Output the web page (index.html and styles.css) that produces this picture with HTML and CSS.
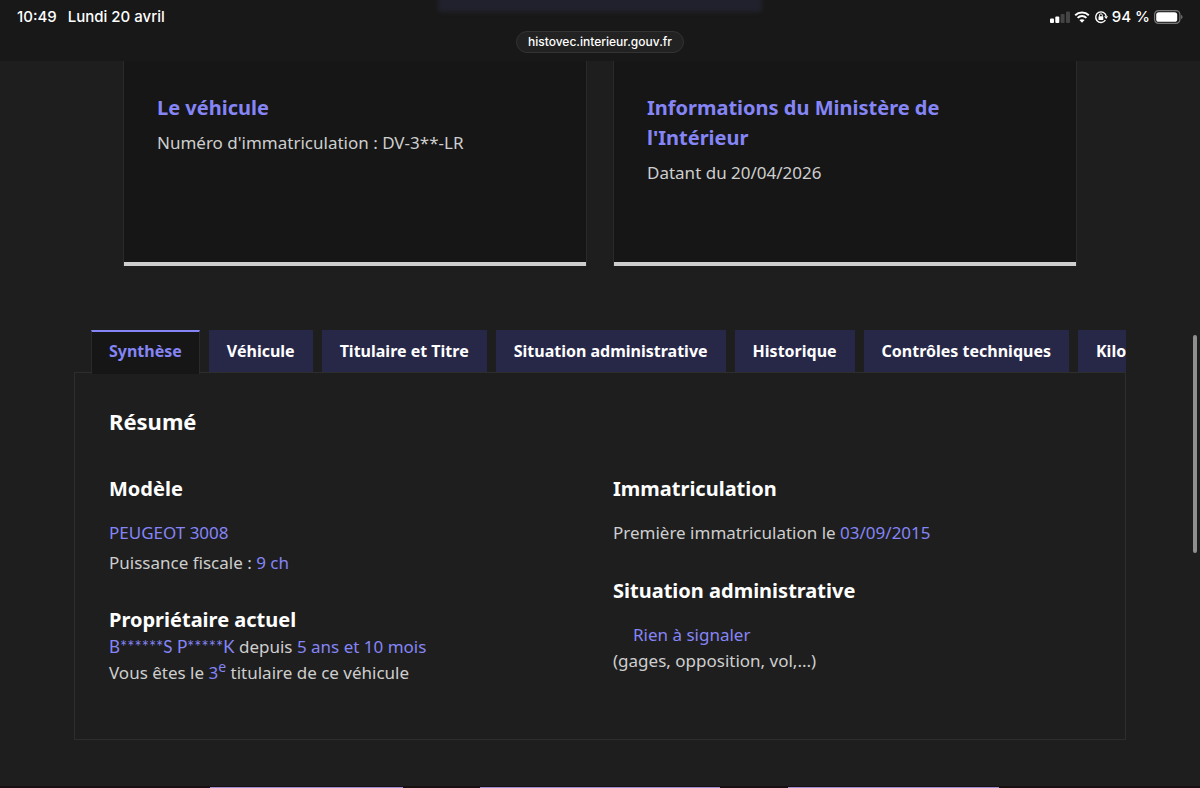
FILE: index.html
```html
<!DOCTYPE html>
<html lang="fr">
<head>
<meta charset="utf-8">
<meta name="viewport" content="width=device-width, initial-scale=1">
<title>HistoVec</title>
<link rel="stylesheet" href="styles.css">
</head>
<body>
<header class="status">
  <div class="glow"></div>
  <div class="status-row">
    <div class="status-left"><span>10:49</span><span>Lundi 20 avril</span></div>
    <div class="status-right">
      <svg class="signal" width="20" height="12" viewBox="0 0 20 12" aria-hidden="true"><rect x="0" y="7.500" width="4" height="4.500" rx="1"/><rect x="5.300" y="5.500" width="4" height="6.500" rx="1"/><rect class="dim" x="10.600" y="3" width="4" height="9" rx="1"/><rect class="dim" x="16" y="0.500" width="4" height="11.500" rx="1"/></svg>
      <svg class="wifi" width="16" height="12" viewBox="0 0 16 12" aria-hidden="true"><path d="M1.200 4.300C5 .700 11 .700 14.800 4.300M3.600 6.900c2.500-2.400 6.300-2.400 8.800 0" fill="none" stroke="#fff" stroke-width="2"/><path d="M8 11.700 5.400 9.100c1.500-1.300 3.700-1.300 5.200 0z" fill="#fff"/></svg>
      <svg class="lock" width="14" height="14" viewBox="0 0 14 14" aria-hidden="true"><path d="M11.400 10.200A5.300 5.300 0 1 1 12.200 6" fill="none" stroke="#fff" stroke-width="1.400"/><path d="M10 6.300h4L12.200 9z" fill="#fff"/><rect x="4.500" y="6.300" width="4.800" height="3.700" rx=".6" fill="#fff"/><path d="M5.500 6.500V5.200a1.400 1.400 0 0 1 2.800 0v1.300" fill="none" stroke="#fff"/></svg>
      <span>94 %</span>
      <svg class="battery" width="29" height="14" viewBox="0 0 29 14" aria-hidden="true"><rect x=".6" y=".6" width="25.300" height="12.800" rx="4" fill="none" stroke="#777" stroke-width="1.200"/><rect x="2.200" y="2.200" width="21" height="9.600" rx="2.600" fill="#fff"/><path d="M27.200 4.800c1.800.7 1.800 3.700 0 4.400z" fill="#777"/></svg>
    </div>
  </div>
  <div class="address">histovec.interieur.gouv.fr</div>
</header>
<main class="page">
  <section class="cards">
    <article class="card">
      <h2>Le véhicule</h2>
      <p>Numéro d'immatriculation : DV-3**-LR</p>
    </article>
    <article class="card">
      <h2>Informations du Ministère de l'Intérieur</h2>
      <p>Datant du 20/04/2026</p>
    </article>
  </section>
  <section class="report">
    <div class="tabs" role="tablist">
      <button class="tab active" type="button" role="tab" aria-selected="true">Synthèse</button>
      <button class="tab" type="button" role="tab">Véhicule</button>
      <button class="tab" type="button" role="tab">Titulaire et Titre</button>
      <button class="tab" type="button" role="tab">Situation administrative</button>
      <button class="tab" type="button" role="tab">Historique</button>
      <button class="tab" type="button" role="tab">Contrôles techniques</button>
      <button class="tab" type="button" role="tab">Kilométrage</button>
    </div>
    <div class="panel" role="tabpanel">
      <h3 class="title">Résumé</h3>
      <div class="columns">
        <div>
          <h4>Modèle</h4>
          <p class="spaced"><b>PEUGEOT 3008</b></p>
          <p class="tall">Puissance fiscale : <b>9 ch</b></p>
          <h4 class="owner">Propriétaire actuel</h4>
          <p><b class="masked">B******S P*****K</b> depuis <b>5 ans et 10 mois</b></p>
          <p>Vous êtes le <b>3<sup>e</sup></b> titulaire de ce véhicule</p>
        </div>
        <div>
          <h4>Immatriculation</h4>
          <p class="spaced">Première immatriculation le <b>03/09/2015</b></p>
          <h4 class="situation">Situation administrative</h4>
          <p class="spaced indent"><b>Rien à signaler</b></p>
          <p>(gages, opposition, vol,...)</p>
        </div>
      </div>
    </div>
  </section>
</main>
<div class="scrollbar"></div>
<footer class="dock"><span></span><span></span><span></span></footer>
</body>
</html>
```
FILE: styles.css
```css
* { box-sizing: border-box; }
html { overflow: hidden; }
body {
  margin: 0;
  min-height: 100vh;
  display: flex;
  flex-direction: column;
  background: #1e1e1e;
  color: #cecece;
  font: 17px/26px "Noto Sans", sans-serif;
}
h2, h3, h4, p { margin: 0; }
b { font-weight: 400; color: #8585f6; }
.masked { font-family: Lato, sans-serif; line-height: 1; }

.status {
  position: relative;
  padding: 6px 17px 8px;
  background: #181818;
  color: #fff;
  font-family: Inter, sans-serif;
  overflow: hidden;
}
.glow {
  position: absolute;
  top: -10px;
  left: 36.5%;
  right: 36.5%;
  height: 22px;
  background: #21212d;
  filter: blur(2px);
}
.status-row {
  position: relative;
  display: flex;
  justify-content: space-between;
  font-size: 15px;
  line-height: 22px;
  font-weight: 500;
}
.status-left { display: flex; gap: 11px; }
.status-right { display: flex; align-items: center; gap: 4px; }
.signal { fill: #fff; }
.signal .dim { fill: #444; }
.address {
  width: fit-content;
  margin: 3px auto 0;
  padding: 0 11px;
  border: 1px solid #333;
  border-radius: 11px;
  background: #222;
  font-size: 12px;
  line-height: 20px;
  font-weight: 500;
}

.page { flex: 1; padding: 0 74px 46px; }
.cards {
  display: grid;
  grid-template-columns: 1fr 1fr;
  gap: 26px;
  padding: 0 49px;
}
.card {
  padding: 32px 33px 80px;
  background: linear-gradient(#cecece, #cecece) bottom / 100% 4px no-repeat border-box #161616;
  border: solid #2a2a2a;
  border-width: 0 1px;
}
.card h2 {
  font-size: 20px;
  line-height: 30px;
  color: #8585f6;
  margin-bottom: 7px;
}

.report { margin-top: 64px; }
.tabs {
  position: relative;
  display: flex;
  gap: 9px;
  padding-left: 17px;
  overflow: hidden;
}
.tab {
  flex: none;
  margin-bottom: 2px;
  padding: 8px 18px;
  border: 0;
  background: #272747;
  color: #fff;
  font: 700 16px/26px "Noto Sans", sans-serif;
}
.tab.active {
  margin-bottom: 0;
  padding: 6px 17px 10px;
  border: solid #2a2a2a;
  border-width: 0 1px;
  border-top: 2px solid #8585f6;
  background: #161616;
  color: #8585f6;
}
.panel {
  margin-top: -2px;
  padding: 31px 34px 53px;
  border: 1px solid #2d2d2d;
}
.title { font-size: 22px; line-height: 34px; color: #fff; }
.columns {
  display: grid;
  grid-template-columns: 1fr 1fr;
  gap: 26px;
  margin-top: 37px;
}
h4 { font-size: 20px; line-height: 28px; color: #fff; }
.spaced { margin-top: 17px; }
.tall { line-height: 34px; }
.owner { margin-top: 26px; }
.situation { margin-top: 31px; }
.indent { padding-left: 20px; }
sup { font-size: 14px; line-height: 0; }

.scrollbar {
  position: fixed;
  top: 335px;
  right: 3px;
  width: 4px;
  height: 218px;
  border-radius: 2px;
  background: #8f8f8f;
}
.dock {
  display: grid;
  grid-template-columns: 210fr 193fr 77fr 240fr 68fr 211fr 201fr;
  padding-top: 1px;
  background: #1a1012;
}
.dock span { height: 1px; background: #9c8fd0; }
.dock span:nth-child(1) { grid-column: 2; }
.dock span:nth-child(2) { grid-column: 4; }
.dock span:nth-child(3) { grid-column: 6; }
```
